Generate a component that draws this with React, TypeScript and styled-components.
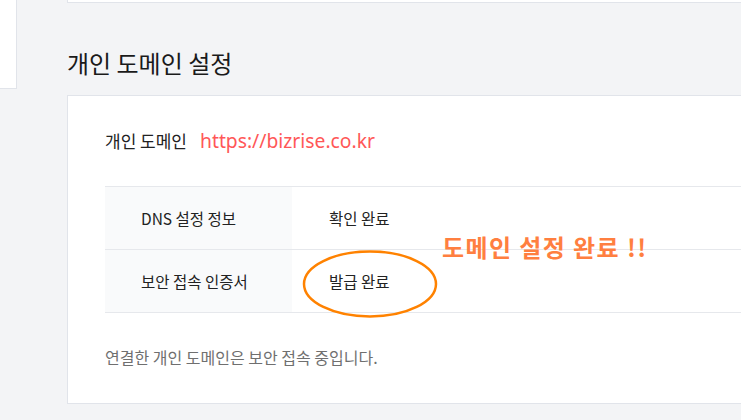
import styled, { createGlobalStyle } from 'styled-components';

const GlobalStyle = createGlobalStyle`
  html, body {
    margin: 0;
    padding: 0;
    background: #f3f4f6;
    overflow: hidden;
  }
  body {
    font-family: "Noto Sans CJK KR", "Noto Sans", sans-serif;
    color: #222;
  }
`

const Page = styled.div`
  display: flex;
  align-items: flex-start;
  gap: 50px;
  width: 900px;
`

const Sidebar = styled.aside`
  width: 16px;
  height: 88px;
  background: #fff;
  border-right: 1px solid #e1e4ea;
  border-bottom: 1px solid #e1e4ea;
`

const Main = styled.main`
  flex: 1;
  display: flex;
  flex-direction: column;
`

const TopCardEdge = styled.div`
  height: 2px;
  background: #fff;
  border-left: 1px solid #e1e4ea;
  border-bottom: 1px solid #e1e4ea;
`

const Title = styled.h2`
  margin: 0;
  padding: 44px 0 16px;
  font-size: 24px;
  font-weight: 400;
  line-height: 32px;
  color: #1a1a1a;
`

const Card = styled.section`
  position: relative;
  background: #fff;
  border: 1px solid #e1e4ea;
  padding: 26px 0 34px 37px;
`

const DomainRow = styled.div`
  display: flex;
  align-items: center;
  gap: 13px;
  height: 36px;
  margin-bottom: 28px;
`

const Label = styled.span`
  font-size: 17px;
  color: #222;
`

const Url = styled.span`
  font-family: "Noto Sans", sans-serif;
  font-size: 19.3px;
  color: #ff5757;
`

const Table = styled.div`
  border-top: 1px solid #e6e8ec;
`

const Row = styled.div`
  display: grid;
  grid-template-columns: 187px 1fr;
  height: 62px;
  border-bottom: 1px solid #e6e8ec;
`

const Cell = styled.div<{ $head?: boolean }>`
  display: flex;
  align-items: center;
  padding-left: ${p => (p.$head ? '36px' : '37px')};
  background: ${p => (p.$head ? '#f9fafb' : '#fff')};
  font-size: 15.5px;
  color: #222;
`

const Note = styled.p`
  margin: 32px 0 0;
  font-size: 16px;
  line-height: 24px;
  color: #6f6f6f;
`

const Callout = styled.span`
  position: absolute;
  left: 374px;
  top: 134px;
  font-size: 24px;
  line-height: 34px;
  font-weight: 700;
  color: #ff7f40;
  letter-spacing: 1.4px;
`

const Circle = styled.svg`
  position: absolute;
  left: 232px;
  top: 152px;
  overflow: visible;
`

export default function App() {
  return (
    <>
      <GlobalStyle />
      <Page>
        <Sidebar />
        <Main>
          <TopCardEdge />
          <Title>개인 도메인 설정</Title>
          <Card>
            <DomainRow>
              <Label>개인 도메인</Label>
              <Url>https://bizrise.co.kr</Url>
            </DomainRow>
            <Table>
              <Row>
                <Cell $head>DNS 설정 정보</Cell>
                <Cell>확인 완료</Cell>
              </Row>
              <Row>
                <Cell $head>보안 접속 인증서</Cell>
                <Cell>발급 완료</Cell>
              </Row>
            </Table>
            <Note>연결한 개인 도메인은 보안 접속 중입니다.</Note>
            <Callout>도메인 설정 완료 !!</Callout>
            <Circle width="140" height="72" viewBox="0 0 140 72">
              <ellipse cx="70" cy="36" rx="66" ry="32.5" fill="none" stroke="#ff8200" strokeWidth="2.5" />
            </Circle>
          </Card>
        </Main>
      </Page>
    </>
  );
}
